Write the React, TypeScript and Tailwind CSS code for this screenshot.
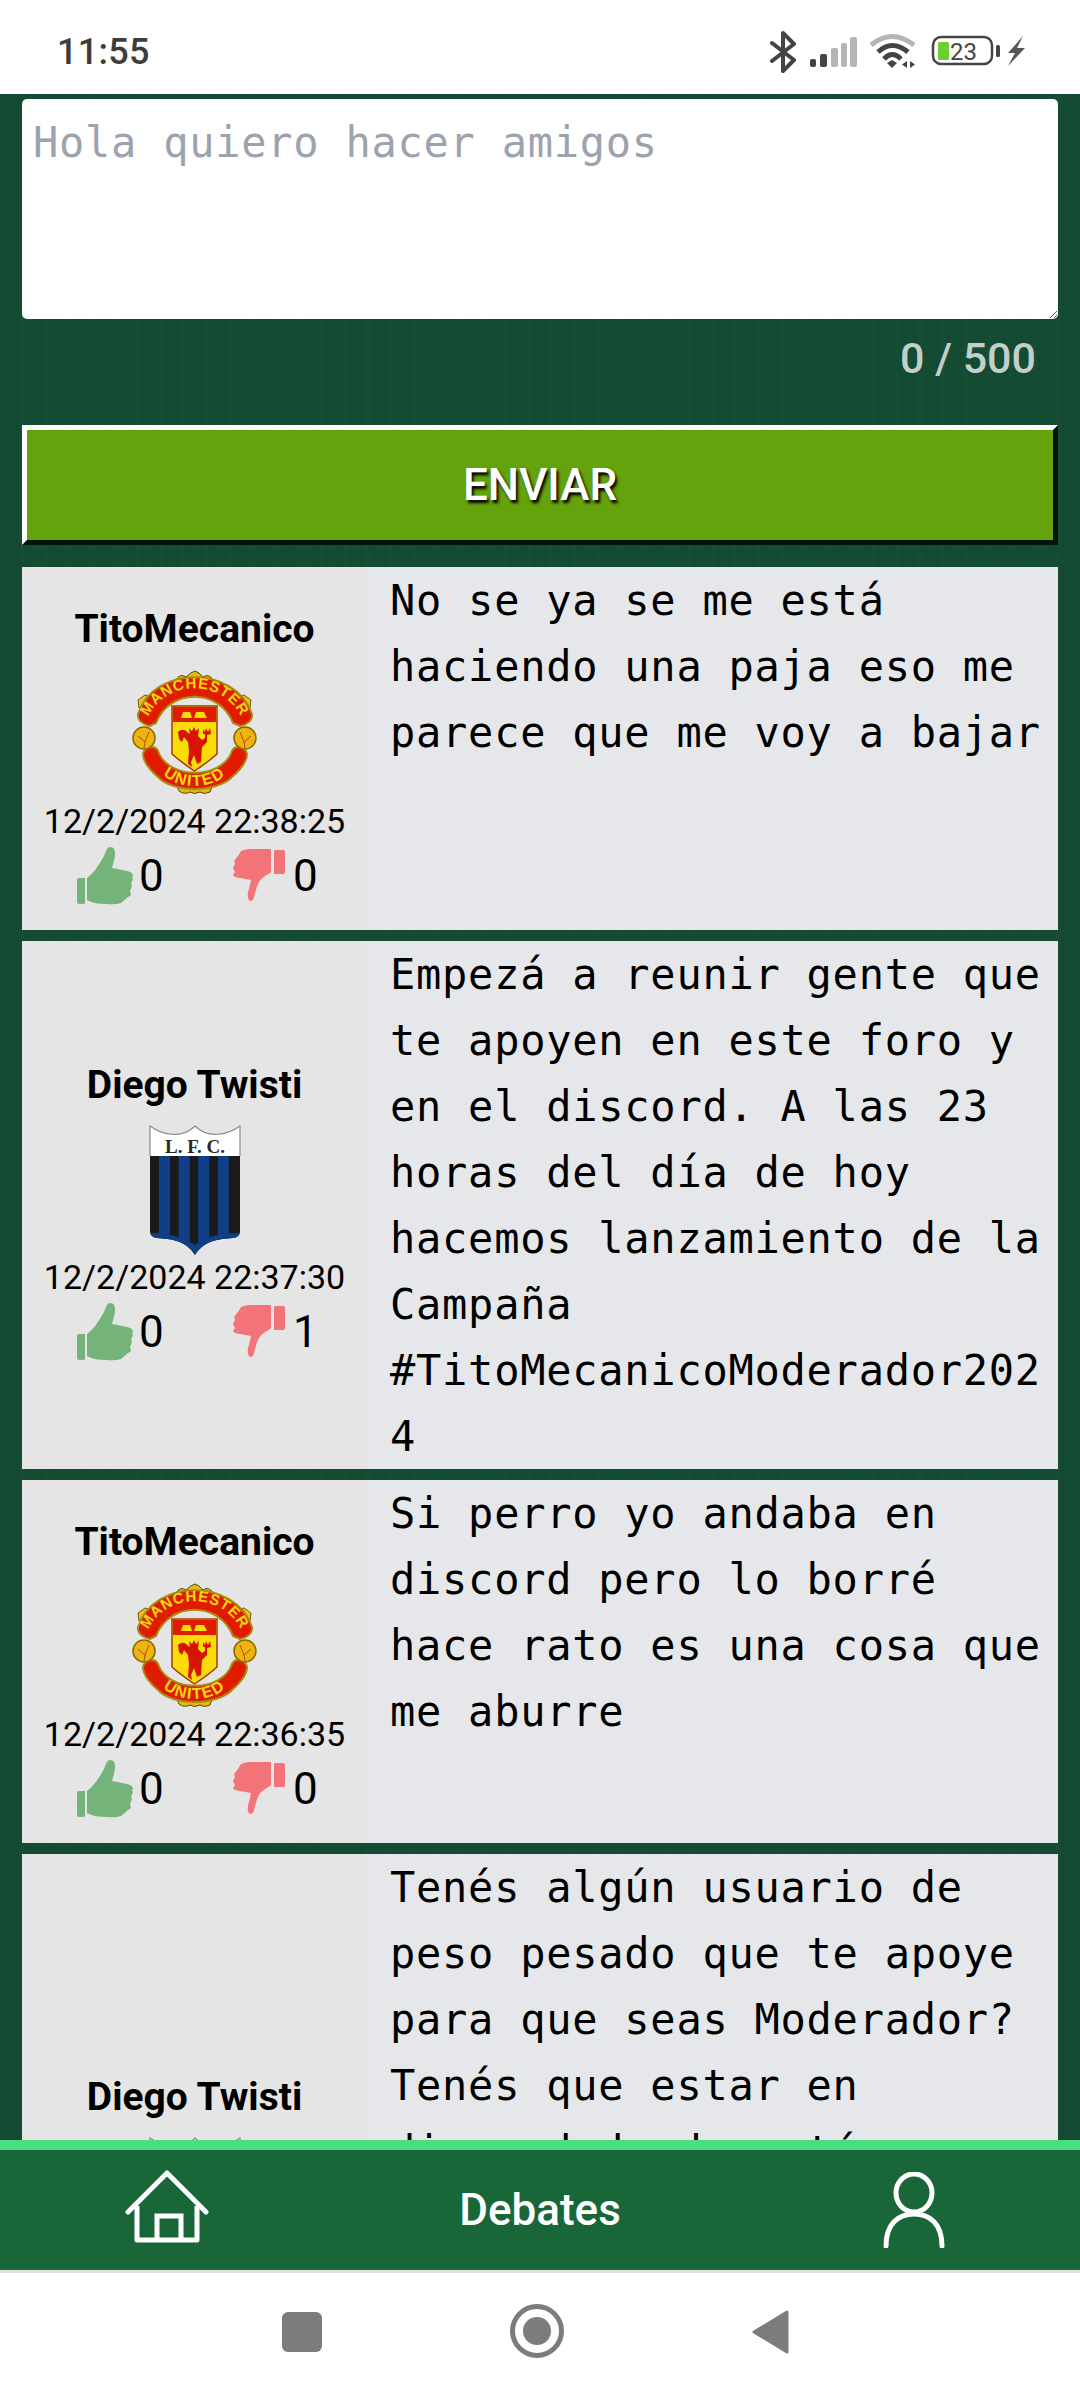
import React from "react";

const MONO = "font-['DejaVu_Sans_Mono','Liberation_Mono',monospace]";

function ThumbUp() {
  return (
    <svg viewBox="0 0 57 58" className="w-[57px] h-[58px] shrink-0">
      <path fill="#74b37a" d="M0 33 Q0 31 2 31 H8 V56 Q8 57 6 57 H2 Q0 57 0 55Z" />
      <path fill="#74b37a" d="M10 31 C16 27 22 18 27 9 C29 5 29 1 33 0 C37 0 38 3 38 6 C38 12 36 17 35 21 L50 24 Q55 25 56 28 L55 31 L56 32 L54 37 L55 39 L53 44 L54 47 Q54 49 51 50 L44 56 Q38 58 30 57 C22 57 16 56 10 53Z" />
    </svg>
  );
}

function ThumbDown() {
  return (
    <svg viewBox="0 0 52 54" className="w-[52px] h-[54px] shrink-0">
      <path fill="#f27479" d="M41 2 Q41 1 43 1 H50 Q52 1 52 3 V23 Q52 25 50 25 H41Z" />
      <path fill="#f27479" d="M38 0 V23 L37 24 C32 27 27 30 25 35 C23 40 22 44 21 48 C20 53 16 53 15 49 C14 45 16 40 17 36 L18 31 L7 29 Q0 28 0 26 L2 23 L0 19 L2 15 L1 12 L5 7 L8 2 Q12 0 17 0Z" />
    </svg>
  );
}

function ManUtd({ id }: { id: string }) {
  return (
    <svg viewBox="0 0 125 125" className="w-[125px] h-[125px] -mt-[3px]">
      <defs>
        <path id={`${id}-top`} d="M14 52 C30 7 95 7 111 52" />
        <path id={`${id}-bottom`} d="M20 92 C38 124 87 124 105 92" />
      </defs>
      <path d="M44 10 Q48 3 54 7 Q59 2 63 1 Q67 2 71 7 Q77 3 81 10 Q62 7 44 10Z" fill="#e3b917" stroke="#5a4a00" strokeWidth="1" />
      <path d="M44 114 Q62 120 81 114 L78 122 Q72 125 68 122 Q62 125 58 122 Q52 125 47 121Z" fill="#e3b917" stroke="#5a4a00" strokeWidth="1" />
      <path d="M6 30 L13 25 L20 27 L14 38 L7 38Z" fill="#e8c020" stroke="#7a5a00" />
      <path d="M119 30 L112 25 L105 27 L111 38 L118 38Z" fill="#e8c020" stroke="#7a5a00" />
      <path d="M6 44 C22 -5 103 -5 120 44 C121 50 115 55 108 56 L101 53 C88 18 37 18 24 53 L18 56 C11 55 5 50 6 44Z" fill="#e01b00" stroke="#a88b10" strokeWidth="2" />
      <text fontFamily="'Liberation Sans',sans-serif" fontWeight="700" fontSize="15" fill="#f7d90c" letterSpacing="0.9">
        <textPath href={`#${id}-top`} startOffset="50%" textAnchor="middle">MANCHESTER</textPath>
      </text>
      <path d="M11 84 C13 76 23 75 26 81 C36 110 90 110 100 81 C103 75 113 76 115 84 C115 92 108 100 100 107 C84 123 41 123 26 107 C18 100 11 92 11 84Z" fill="#e01b00" stroke="#a88b10" strokeWidth="2" />
      <text fontFamily="'Liberation Sans',sans-serif" fontWeight="700" fontSize="16" fill="#f7d90c" letterSpacing="1.4">
        <textPath href={`#${id}-bottom`} startOffset="50%" textAnchor="middle">UNITED</textPath>
      </text>
      <circle cx="12" cy="68" r="11" fill="#eeb410" stroke="#8a6a00" strokeWidth="1.5" />
      <path d="M6 66 L13 72 L17 62 M13 72 L12 78" stroke="#b8480a" strokeWidth="1" fill="none" />
      <circle cx="113" cy="68" r="11" fill="#eeb410" stroke="#8a6a00" strokeWidth="1.5" />
      <path d="M119 66 L112 72 L108 62 M112 72 L113 78" stroke="#b8480a" strokeWidth="1" fill="none" />
      <path d="M40 36 H85 V84 Q76 92 62.5 101 Q49 92 40 84Z" fill="#f9dc09" stroke="#a33c00" strokeWidth="1.5" />
      <path d="M41 37 H84 V52 H41Z" fill="#e01b00" />
      <path d="M49 48 L51 42 H58 L60 48Z M62 48 L64 42 H72 L75 48Z" fill="#f9dc09" />
      <path d="M41 53 H84" stroke="#f9dc09" strokeWidth="1" />
      <path d="M46 62 C49 59 53 59 55 62 L58 64 L57 58 L60 61 L62 57 L64 61 L67 58 L66 66 L70 70 L73 68 L73 64 L71 64 L71 59 L73 62 L74 58 L76 62 L78 58 L79 64 L75 65 L75 72 L70 77 L69 92 L65 94 L62 85 L59 92 L60 97 L56 94 L57 81 L56 72 L52 67 L50 72 L47 69Z" fill="#d71400" />
    </svg>
  );
}

function Liverpool({ id }: { id: string }) {
  const stripes = [10, 29.6, 49.2, 68.8];
  return (
    <svg viewBox="0 0 92 130" className="w-[92px] h-[130px]">
      <defs>
        <clipPath id={`${id}-shape`}>
          <path d="M1 1 C12 9 32 15 46 1 C60 15 80 9 91 1 V106 Q91 112 84 113 C66 114 54 117 46 130 C38 117 26 114 8 113 Q1 112 1 106Z" />
        </clipPath>
      </defs>
      <g clipPath={`url(#${id}-shape)`}>
        <rect x="0" y="0" width="92" height="31" fill="#ffffff" />
        <rect x="0" y="31" width="92" height="100" fill="#1b1a1a" />
        {stripes.map((x) => (
          <rect key={x} x={x} y="31" width="11" height="100" fill="#0f3f86" />
        ))}
        <path d="M1 108 Q28 108 46 120 Q62 108 91 108 V130 H1Z" fill="#0f3f86" />
      </g>
      <path d="M1 31 V1 C12 9 32 15 46 1 C60 15 80 9 91 1 V31" fill="none" stroke="#8a8a8a" strokeWidth="1.2" />
      <text x="46" y="28" textAnchor="middle" fontFamily="'Liberation Serif',serif" fontWeight="700" fontSize="19" fill="#2a2a2a">L. F. C.</text>
    </svg>
  );
}

type Post = { name: string; date: string; crest: "mu" | "lfc"; up: number; down: number; text: string[]; h: string };

const posts: Post[] = [
  {
    name: "TitoMecanico",
    date: "12/2/2024 22:38:25",
    crest: "mu",
    up: 0,
    down: 0,
    text: ["No se ya se me está", "haciendo una paja eso me", "parece que me voy a bajar"],
    h: "h-[363px]",
  },
  {
    name: "Diego Twisti",
    date: "12/2/2024 22:37:30",
    crest: "lfc",
    up: 0,
    down: 1,
    text: [
      "Empezá a reunir gente que",
      "te apoyen en este foro y",
      "en el discord. A las 23",
      "horas del día de hoy",
      "hacemos lanzamiento de la",
      "Campaña",
      "#TitoMecanicoModerador202",
      "4",
    ],
    h: "h-[528px]",
  },
  {
    name: "TitoMecanico",
    date: "12/2/2024 22:36:35",
    crest: "mu",
    up: 0,
    down: 0,
    text: ["Si perro yo andaba en", "discord pero lo borré", "hace rato es una cosa que", "me aburre"],
    h: "h-[363px]",
  },
  {
    name: "Diego Twisti",
    date: "",
    crest: "lfc",
    up: 0,
    down: 0,
    text: [
      "Tenés algún usuario de",
      "peso pesado que te apoye",
      "para que seas Moderador?",
      "Tenés que estar en",
      "discord desde esté",
    ],
    h: "h-[726px]",
  },
];

function Card({ p, index }: { p: Post; index: number }) {
  const id = `crest-${index}`;
  return (
    <div className={`flex shrink-0 ${p.h} bg-[#e5e7eb]`}>
      <div className="w-[345px] shrink-0 bg-[#e5e5e5] flex flex-col items-center justify-center pt-[11px] text-black font-['Roboto',sans-serif]">
        <div className="text-[39px] leading-[50px] font-bold">{p.name}</div>
        <div className="h-[130px] mt-[15px] flex items-center justify-center">
          {p.crest === "mu" ? <ManUtd id={id} /> : <Liverpool id={id} />}
        </div>
        <div className="h-[42px] text-[34px] leading-[42px] mt-[1px] whitespace-nowrap">{p.date}</div>
        <div className="flex items-center h-[58px] mt-[5px] self-start ml-[55px]">
          {p.date && <ThumbUp />}
          {p.date && <span className="text-[44px] leading-[50px] ml-[5px] w-[94px]">{p.up}</span>}
          {p.date && <ThumbDown />}
          {p.date && <span className="text-[44px] leading-[50px] ml-[8px]">{p.down}</span>}
        </div>
      </div>
      <div className={`flex-1 pl-[23px] pt-[1px] text-[42px] tracking-[0.75px] leading-[66px] text-black whitespace-nowrap ${MONO}`}>
        {p.text.map((l, i) => (
          <div key={i}>{l}</div>
        ))}
      </div>
    </div>
  );
}

export default function App() {
  return (
    <div className="w-[1080px] h-[2400px] flex flex-col overflow-hidden bg-white font-['Roboto',sans-serif]">
      {/* status bar */}
      <div className="h-[94px] shrink-0 bg-white flex items-center justify-between pl-[57px] pr-[53px] pt-[10px]">
        <span className="text-[36px] font-medium text-[#3d3d3d] tracking-[0.3px]">11:55</span>
        <svg viewBox="0 0 257 44" className="w-[257px] h-[44px]">
          <path d="M2 13 L24 30 L13 41 V3 L24 14 L2 31" fill="none" stroke="#444" strokeWidth="4" strokeLinejoin="round" strokeLinecap="round" />
          <rect x="40" y="29" width="6" height="8" rx="2" fill="#444" />
          <rect x="50" y="24" width="7" height="13" rx="2" fill="#444" />
          <rect x="61" y="18" width="7" height="19" rx="2" fill="#b5b5b5" />
          <rect x="71" y="13" width="6" height="24" rx="2" fill="#b5b5b5" />
          <rect x="80" y="7" width="7" height="30" rx="2" fill="#b5b5b5" />
          <path d="M101 15 Q122 -2 144 15" fill="none" stroke="#b5b5b5" strokeWidth="5" />
          <path d="M108 22 Q122 9 138 22" fill="none" stroke="#444" strokeWidth="5" />
          <path d="M114 29 Q122 20 131 29" fill="none" stroke="#444" strokeWidth="5" />
          <path d="M117 33 L122 30 L127 33 L122 38Z" fill="#444" />
          <path d="M137 31 V38 L132 34.5Z M140 31 L145 34.5 L140 38Z" fill="#444" />
          <rect x="163" y="7" width="59" height="27" rx="8" fill="none" stroke="#444" strokeWidth="2.5" />
          <rect x="168" y="12" width="11" height="18" rx="1.5" fill="#6cce2f" />
          <text x="180" y="30" fontFamily="'Roboto',sans-serif" fontSize="24" fill="#444">23</text>
          <rect x="226" y="15" width="4" height="12" rx="1.5" fill="#444" />
          <path d="M253 6 L238 23 L245 23 L238 36 L255 18 L247 18 L253 6Z" fill="#555" />
        </svg>
      </div>

      {/* main */}
      <div className="relative flex-1 min-h-0 overflow-hidden bg-[#134b32] bg-[repeating-linear-gradient(90deg,rgba(255,255,255,0.01)_0px,rgba(0,0,0,0.018)_5px,rgba(255,255,255,0.006)_11px,rgba(0,0,0,0.012)_17px,rgba(255,255,255,0.01)_23px)] px-[22px] pt-[5px]">
        <textarea
          readOnly
          placeholder="Hola quiero hacer amigos"
          className="block w-full h-[220px] rounded-[5px] bg-white px-[11px] pt-[12px] pb-[6px] text-[42px] tracking-[0.75px] leading-[63px] text-black placeholder:text-[#9ca3af] outline-none font-['DejaVu_Sans_Mono',monospace]"
        />
        <div className="h-[106px] pt-[15px] pr-[22px] text-right text-[43px] leading-[48px] text-[#c3cfca] font-medium">0 / 500</div>
        <div className="h-[120px] flex items-center justify-center bg-[#65a30d] border-[5px] border-t-white border-l-white border-r-[#03120d] border-b-[#03120d] text-white text-[44px] font-medium [text-shadow:2px_3px_3px_#000]">
          ENVIAR
        </div>
        <div className="mt-[22px] flex flex-col gap-[11px]">
          {posts.map((p, i) => (
            <Card key={i} p={p} index={i} />
          ))}
        </div>
      </div>

      {/* tab bar */}
      <div className="h-[130px] shrink-0 bg-[#196638] border-t-[10px] border-[#4ade80] flex items-center justify-between pl-[125px] pr-[135px] text-white">
        <svg viewBox="0 0 84 74" className="w-[84px] h-[74px] -mt-[7px]">
          <path d="M3 42 L42 3 L81 42" fill="none" stroke="#fff" strokeWidth="5" strokeLinecap="round" strokeLinejoin="round" />
          <path d="M12 36 V70 H72 V36" fill="none" stroke="#fff" strokeWidth="5" strokeLinejoin="round" />
          <path d="M32 70 V46 H56 V70" fill="none" stroke="#fff" strokeWidth="5" />
        </svg>
        <span className="text-[44px] font-medium mr-[12px]">Debates</span>
        <svg viewBox="0 0 62 76" className="w-[62px] h-[76px]">
          <ellipse cx="31" cy="21" rx="18" ry="19" fill="none" stroke="#fff" strokeWidth="5" />
          <path d="M3 74 C3 52 15 42 31 42 C47 42 59 52 59 74" fill="none" stroke="#fff" strokeWidth="5" strokeLinecap="round" />
        </svg>
      </div>

      {/* android nav */}
      <div className="h-[130px] shrink-0 bg-white border-t-[3px] border-[#dfe1e1] flex items-start pt-[37px] pl-[282px]">
        <svg viewBox="0 0 40 40" className="w-[40px] h-[40px] mt-[2px]">
          <rect x="0" y="0" width="40" height="40" rx="6" fill="#7c7c7c" />
        </svg>
        <svg viewBox="0 0 54 54" className="w-[54px] h-[54px] ml-[188px] -mt-[6px]">
          <circle cx="27" cy="27" r="24.5" fill="none" stroke="#7c7c7c" strokeWidth="5" />
          <circle cx="27" cy="27" r="14" fill="#7c7c7c" />
        </svg>
        <svg viewBox="0 0 38 46" className="w-[38px] h-[46px] ml-[187px] -mt-[1px]">
          <path d="M36 3 V43 L3 23Z" fill="#7c7c7c" stroke="#7c7c7c" strokeWidth="3" strokeLinejoin="round" />
        </svg>
      </div>
    </div>
  );
}
